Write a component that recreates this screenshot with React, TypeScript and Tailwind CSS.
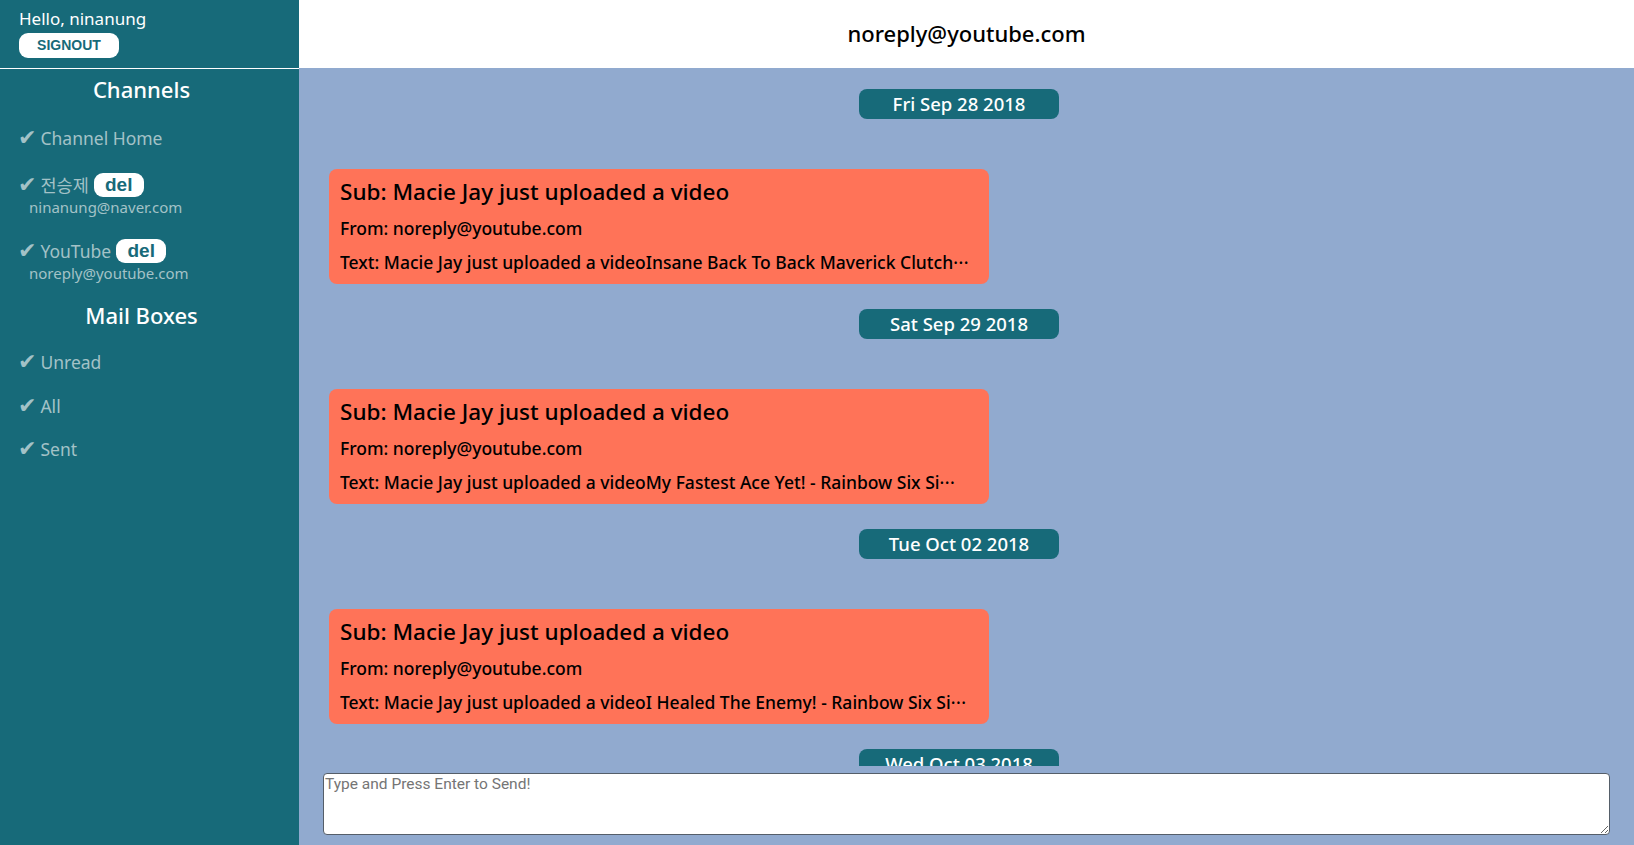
import React from "react";

const FONT = { fontFamily: '"Noto Sans", "Noto Sans CJK KR", sans-serif' };

const messages = [
  { date: "Fri Sep 28 2018", text: "Text: Macie Jay just uploaded a videoInsane Back To Back Maverick Clutch", more: true },
  { date: "Sat Sep 29 2018", text: "Text: Macie Jay just uploaded a videoMy Fastest Ace Yet! - Rainbow Six Si", more: true },
  { date: "Tue Oct 02 2018", text: "Text: Macie Jay just uploaded a videoI Healed The Enemy! - Rainbow Six Si", more: true },
  { date: "Wed Oct 03 2018", text: "Text: Macie Jay just uploaded a video", more: false },
];

function Item({ label, del, email }: { label: string; del?: boolean; email?: string }) {
  return (
    <div className="pl-[18px]">
      <div className="flex items-center h-[24px] text-[17.5px] text-[#a3c2c7]">
        <span className="text-[22px] leading-[24px] mr-[4px]" style={{ fontFamily: '"DejaVu Sans", sans-serif' }}>✔</span>
        <span>{label}</span>
        {del && (
          <span
            className="ml-[5px] h-[24px] w-[50px] bg-white rounded-[9px] text-[#176a79] text-[19px] font-bold flex items-center justify-center"
            style={{ fontFamily: '"Liberation Sans", Arial, sans-serif' }}
          >
            del
          </span>
        )}
      </div>
      {email && <div className="pl-[11px] text-[15px] leading-[20px] text-[#a3c2c7]">{email}</div>}
    </div>
  );
}

export default function App() {
  return (
    <div className="flex h-[845px] w-[1634px] overflow-hidden" style={FONT}>
      <aside className="w-[299px] shrink-0 bg-[#176a79] flex flex-col">
        <div className="h-[69px] border-b border-white pl-[19px] pt-[8px]">
          <div className="text-white text-[17px] leading-[22px]">Hello, ninanung</div>
          <button
            className="mt-[3px] w-[100px] h-[25px] bg-white rounded-[9px] text-[#176a79] text-[14px] font-bold flex items-center justify-center"
            style={{ fontFamily: '"Liberation Sans", Arial, sans-serif' }}
          >
            SIGNOUT
          </button>
        </div>
        <div className="pr-[16px] text-center text-white text-[22px] font-medium leading-[30px] mt-[5px]">Channels</div>
        <div className="mt-[22px]">
          <Item label="Channel Home" />
        </div>
        <div className="mt-[23px]">
          <Item label="전승제" del email="ninanung@naver.com" />
        </div>
        <div className="mt-[22px]">
          <Item label="YouTube" del email="noreply@youtube.com" />
        </div>
        <div className="pr-[16px] text-center text-white text-[22px] font-medium leading-[30px] mt-[17px]">Mail Boxes</div>
        <div className="mt-[20px]">
          <Item label="Unread" />
        </div>
        <div className="mt-[20px]">
          <Item label="All" />
        </div>
        <div className="mt-[19px]">
          <Item label="Sent" />
        </div>
      </aside>
      <main className="flex-1 flex flex-col bg-[#91aacf] min-w-0">
        <header className="h-[68px] shrink-0 bg-white flex items-center justify-center text-[22px] font-medium text-black pb-[2px]">
          noreply@youtube.com
        </header>
        <div className="flex-1 overflow-hidden pt-[21px] pl-[30px] pr-[15px] min-h-0">
          {messages.map((m, i) => (
            <div key={i} className={i > 0 ? "mt-[25px]" : ""}>
              <div className="flex justify-center">
                <div className="w-[200px] h-[30px] rounded-[8px] bg-[#176a79] text-white text-[18.5px] font-medium flex items-center justify-center -translate-x-[15px]">
                  {m.date}
                </div>
              </div>
              <div className="mt-[50px] w-[660px] h-[115px] rounded-[8px] bg-[#ff7358] px-[11px] pt-[8px] text-black">
                <div className="text-[22.5px] leading-[30px] font-medium">Sub: Macie Jay just uploaded a video</div>
                <div className="mt-[9px] text-[17.5px] leading-[24px] font-medium">From: noreply@youtube.com</div>
                <div className="mt-[10px] text-[17.5px] leading-[24px] font-medium whitespace-nowrap overflow-hidden">
                  {m.text}
                  {m.more && <span className="tracking-[0.5px]">···</span>}
                </div>
              </div>
            </div>
          ))}
        </div>
        <div className="h-[79px] shrink-0 pt-[7px] pb-[10px] px-[24px]">
          <textarea
            className="w-full h-[62px] bg-white border border-[#555e69] rounded-[4px] text-[15.5px] leading-[18px] px-[1px] pt-[1px] text-black placeholder:text-[#757575] outline-none"
            style={{ fontFamily: 'Roboto, sans-serif' }}
            placeholder="Type and Press Enter to Send!"
          />
        </div>
      </main>
    </div>
  );
}
